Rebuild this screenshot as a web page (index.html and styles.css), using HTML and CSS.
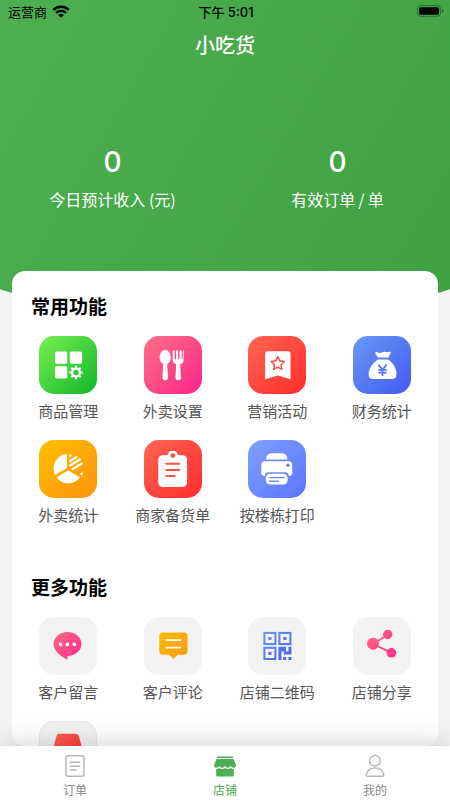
FILE: index.html
```html
<!DOCTYPE html>
<html lang="zh-CN">
<head>
<meta charset="utf-8">
<meta name="viewport" content="width=device-width, initial-scale=1">
<title>小吃货</title>
<link rel="stylesheet" href="styles.css">
</head>
<body>
<svg class="defs" aria-hidden="true">
  <defs>
    <linearGradient id="pink" x1="0" y1="0" x2="1" y2="1"><stop offset="0" stop-color="#fd6a85"/><stop offset="1" stop-color="#fc2d8b"/></linearGradient>
    <linearGradient id="amber" x1="0" y1="0" x2="1" y2="1"><stop offset="0" stop-color="#ffbc05"/><stop offset="1" stop-color="#ff970d"/></linearGradient>
    <linearGradient id="blue" gradientUnits="userSpaceOnUse" x1="15" y1="15" x2="43" y2="43"><stop offset="0" stop-color="#6496f4"/><stop offset="1" stop-color="#4560f0"/></linearGradient>
    <linearGradient id="share" gradientUnits="userSpaceOnUse" x1="14" y1="14" x2="43" y2="40"><stop offset="0" stop-color="#fd6a85"/><stop offset="1" stop-color="#fc2d8b"/></linearGradient>
    <linearGradient id="red" x1="0" y1="0" x2="1" y2="1"><stop offset="0" stop-color="#ff6252"/><stop offset="1" stop-color="#fe302f"/></linearGradient>
  </defs>
</svg>
<main class="page">
  <header class="hero">
    <div class="status">
      <div class="carrier">运营商
        <svg width="18" height="13" viewBox="0 0 18 13" fill="none" stroke="#000" stroke-width="2.3"><path d="M1.3 4.9a11 11 0 0 1 15.4 0M4 7.9a7.1 7.1 0 0 1 10 0"/><path d="M9 12.8 6.3 10a3.9 3.9 0 0 1 5.4 0z" fill="#000" stroke="none"/></svg>
      </div>
      <time>下午 5:01</time>
      <div class="battery">
        <svg width="27" height="12" viewBox="0 0 27 12"><rect x=".6" y=".6" width="23" height="10.8" rx="3" fill="none" stroke="#235c27" stroke-opacity=".75"/><rect x="2.2" y="2.2" width="19.8" height="7.6" rx="1.6"/><path d="M25 4v4q1.6-.6 1.6-2T25 4z" fill="#2a692e"/></svg>
      </div>
    </div>
    <h1>小吃货</h1>
    <dl class="stats">
      <div><dd>0</dd><dt>今日预计收入 (元)</dt></div>
      <div><dd>0</dd><dt>有效订单&thinsp;/&thinsp;单</dt></div>
    </dl>
  </header>
  <div class="card">
    <section>
      <h2>常用功能</h2>
      <div class="grid">
        <a class="item" href="#"><span class="tile green"><svg viewBox="0 0 58 58" fill="#fff"><rect x="16" y="15.5" width="12.3" height="12.3" rx="1.8"/><rect x="30.8" y="15.5" width="12.3" height="12.3" rx="1.8"/><rect x="16" y="30.3" width="12.3" height="12.3" rx="1.8"/><circle cx="37" cy="36.5" r="3.9" fill="none" stroke="#fff" stroke-width="2.4"/><path d="M37 29.8v3M37 40.2v3M30.3 36.5h3M40.7 36.5h3M32.3 31.8l2 2M39.7 39.2l2 2M41.7 31.8l-2 2M34.3 39.2l-2 2" stroke="#fff" stroke-width="2.2"/></svg></span>商品管理</a>
        <a class="item" href="#"><span class="tile pink"><svg viewBox="0 0 58 58" fill="#fff"><path d="M21.2 14c3.2 0 5.6 3.6 5.6 7.6 0 3.1-1.5 5.4-3.6 6.4l.8 13.2c.1 1.9-1.1 3.1-2.8 3.1s-2.9-1.2-2.8-3.1L19.2 28c-2.1-1-3.6-3.3-3.6-6.4 0-4 2.4-7.6 5.6-7.6z"/><path d="M29.6 14.2q1.1 0 1.1 1.2v7q.1 1 .7 1t.7-1v-7q0-1.2 1-1.2t1 1.2v7q.1 1 .7 1t.7-1v-7q0-1.2 1.1-1.2t1.100 1.200v7q.1 1 .6 1t.5-1v-7q0-1.200.9-1v9c0 2.700-1.400 4.200-3.500 4.900l.8 13c.1 1.800-1 3-2.800 3s-2.900-1.200-2.800-3l.8-13c-2.100-.7-3.500-2.200-3.500-4.900v-8q0-1.200.9-1.200z"/></svg></span>外卖设置</a>
        <a class="item" href="#"><span class="tile red"><svg viewBox="0 0 58 58" fill="#fff"><path d="M19.5 15.3h20.7q2.3 0 2.3 2.3v25.7l-12.7-3.8-12.7 3.8V17.6q0-2.3 2.4-2.3z"/><path d="m29.8 20.7 2 4.1 4.6.7-3.3 3.3.8 4.6-4.1-2.2-4.1 2.2.8-4.6-3.3-3.3 4.6-.7z" fill="none" stroke="#ff4a40" stroke-width="1.5" stroke-linejoin="round"/></svg></span>营销活动</a>
        <a class="item" href="#"><span class="tile blue"><svg viewBox="0 0 58 58" fill="#fff"><path d="M22.8 16.2c1.4-.8 2.8 1.1 4.3.8 1.8-.4 2.8-1.5 4.7-1.3 1.8.2 2.9.9 4.7.1 1-.4 1.6.2 1.2 1l-2.2 4.7H25l-2.8-4q-.4-.9.6-1.3z"/><path d="M25.3 23.5h9.8c4.7 2.8 8.5 8.8 8.4 14.6 0 3.2-1.3 4.9-4.2 4.9H19.8c-2.9 0-4.3-1.700-4.200-4.900.1-5.700 4.600-11.800 9.700-14.600z"/><path d="m25.4 28.500 4.100 5.300 4.100-5.300M25.400 33.800h8.200M25.400 36.600h8.200M29.500 33.800v6.100" fill="none" stroke="#5076f1" stroke-width="1.8"/></svg></span>财务统计</a>
        <a class="item" href="#"><span class="tile amber"><svg viewBox="0 0 58 58" fill="#fff"><path d="M27.9 14.1v14l-11.8 6.8a14.2 14.2 0 0 1 11.8-20.8z"/><path d="m17.4 37.2 11.7-6.8L41 37.2a14.3 14.3 0 0 1-23.6 0z"/><path d="m31.1 21 6.5-3.9M31.1 25.6l9.9-6M33.6 29l9-5.3M42.3 34l.6-.4M31 15.7l.6-.3" stroke="#fff" stroke-width="2.300" stroke-linecap="round"/></svg></span>外卖统计</a>
        <a class="item" href="#"><span class="tile red"><svg viewBox="0 0 58 58" fill="#fff"><rect x="14.3" y="15.3" width="28.8" height="31.7" rx="4.5"/><path d="M20.6 19.3v-2.5q0-1.5 1.8-1.5h1.2a5.2 5.2 0 0 1 10.3 0h1.2q1.8 0 1.8 1.5v2.5z"/><circle cx="28.8" cy="15.6" r="2.4" fill="#ff5549"/><path d="M22.3 23.8h13M22.3 30.1h13M22.3 36h8.3" stroke="#ff5046" stroke-width="2" stroke-linecap="round"/></svg></span>商家备货单</a>
        <a class="item" href="#"><span class="tile indigo"><svg viewBox="0 0 58 58" fill="#fff"><path d="M18 19.5c.2-4.1 2.2-6.2 6-6.2h9.5c3.7 0 5.7 2.1 5.9 6.2z"/><path d="M17 21.2h23.4q3.8 0 3.8 3.8v8q0 3-3 3h-.5c0-2.3-1.3-3.8-3.6-3.8H20.4c-2.3 0-3.6 1.5-3.6 3.8h-.5q-3 0-3-3v-8q0-3.8 3.7-3.8z"/><rect x="17.8" y="33.7" width="21.8" height="10.7" rx="4.3"/><circle cx="40" cy="25.2" r="1.8" fill="#6b86ff"/><path d="M21.8 37.6h14.3M21.8 41.2h8.6" stroke="#6b86ff" stroke-width="1.4" stroke-linecap="round"/></svg></span>按楼栋打印</a>
      </div>
    </section>
    <section>
      <h2>更多功能</h2>
      <div class="grid">
        <a class="item" href="#"><span class="tile"><svg viewBox="0 0 58 58"><path d="M28.5 15c7.8 0 14 5.2 14 12 0 6.3-5.9 11.7-14 12v3.8c-7.2-3.8-14-9.2-14-15.8 0-6.8 6.2-12 14-12z" fill="url(#pink)"/><g fill="#fff"><circle cx="21.5" cy="27.4" r="1.8"/><circle cx="28.4" cy="27.4" r="1.8"/><circle cx="35.3" cy="27.4" r="1.8"/></g></svg></span>客户留言</a>
        <a class="item" href="#"><span class="tile"><svg viewBox="0 0 58 58"><path d="M19 15.6h20.8q3.7 0 3.7 3.7v14.8q0 3.7-3.7 3.7h-6.2l-4.2 4.2-4.2-4.2H19q-3.7 0-3.7-3.7V19.3q0-3.7 3.7-3.7z" fill="url(#amber)"/><path d="M22.4 23.1h14M22.4 30.6h14" stroke="#fff" stroke-width="1.8" stroke-linecap="round"/></svg></span>客户评论</a>
        <a class="item" href="#"><span class="tile"><svg viewBox="0 0 58 58"><g fill="none" stroke="url(#blue)" stroke-width="2"><rect x="16.4" y="15.9" width="11" height="11.2"/><rect x="31.4" y="15.9" width="11" height="11.2"/><rect x="16.4" y="30.8" width="11" height="11.2"/></g><path d="M20.3 19.9h3.2v3.2h-3.2zM35.3 19.9h3.2v3.2h-3.2zM20.3 34.8h3.2V38h-3.2zM30.4 29.8h7.7v4.8h2.4v-4.8h2.9v7.6h-7.6v-2.8h-2.4V43h-3zM35.2 40h2.9v3h-2.9zM40.5 40h2.9v3h-2.9z" fill="url(#blue)"/></svg></span>店铺二维码</a>
        <a class="item" href="#"><span class="tile"><svg viewBox="0 0 58 58"><path d="m34.7 17.7-14.5 9.4 18.2 8.8" fill="none" stroke="url(#share)" stroke-width="1.8"/><g fill="url(#share)"><circle cx="20" cy="26.8" r="6"/><circle cx="34.7" cy="17.5" r="4.7"/><circle cx="38.4" cy="35.8" r="4.8"/></g></svg></span>店铺分享</a>
        <a class="item" href="#" aria-label="更多"><span class="tile outlined"><svg viewBox="0 0 58 58"><path d="M20 12.7h16.5q2.4 0 3.2 2l2.300 8q.3 1.500.3 3v12q0 5-5 5H20q-5 0-5-5v-12q0-1.500.3-3l2.300-8q.5-2 2.400-2z" fill="url(#red)"/></svg></span></a>
      </div>
    </section>
  </div>
</main>
<nav class="tabs">
  <a href="#"><svg viewBox="0 0 24 24" fill="none" stroke="#b8b8b8" stroke-width="1.5" stroke-linecap="round"><rect x="3" y="1.700" width="18" height="20.600" rx="2"/><path d="M7.300 8.300h9.400M7.300 12.200h9.400M7.300 16h6"/></svg>订单</a>
  <a href="#" class="active" aria-current="page"><svg viewBox="0 0 24 24" fill="#4caf50"><path d="M4 2.500h16v1.600H4zM3.600 5h16.800L23 11q.3 2.800-2.300 2.800-1.800 0-2.900-1.700-1.200 1.700-2.900 1.700T12 12.100q-1.200 1.700-2.900 1.700t-2.900-1.700q-1.100 1.700-2.900 1.700Q.7 13.800 1 11z"/><path d="M3.200 15q1.800.1 3-.9 2.500 1.900 5.800 0 3.300 1.900 5.800 0 1.200 1 3 .9v6q0 1.500-1.500 1.500H4.700q-1.500 0-1.500-1.500z"/></svg>店铺</a>
  <a href="#"><svg viewBox="0 0 24 24" fill="none" stroke="#b8b8b8" stroke-width="1.500"><circle cx="12" cy="6.800" r="5.300"/><path d="M5 22.200q-2 0-1.700-1.700c.8-4 4.200-6.500 8.700-6.500s7.900 2.500 8.700 6.500q.3 1.700-1.700 1.700z"/></svg>我的</a>
</nav>
</body>
</html>
```

FILE: styles.css
```css
* {
  box-sizing: border-box;
}

body {
  display: flex;
  flex-direction: column;
  height: 100vh;
  margin: 0;
  background: #f4f4f4;
  color: #555;
  font-family: Inter, "Noto Sans CJK SC", sans-serif;
}

a {
  color: inherit;
  text-decoration: none;
}

svg {
  display: block;
}

.defs {
  position: absolute;
  width: 0;
  height: 0;
}

.page {
  display: flex;
  flex: 1;
  flex-direction: column;
  min-height: 0;
  overflow: hidden;
}

.hero {
  flex: none;
  padding-bottom: 113px;
  background: linear-gradient(120deg, #4caf50, #3fa142);
  clip-path: ellipse(111% 100% at 50% 0);
  color: #fff;
}

.status {
  display: grid;
  grid-template-columns: 1fr auto 1fr;
  align-items: center;
  height: 22px;
  padding: 0 6px 0 8px;
  color: #000;
  font-size: 13px;
  font-weight: 500;
}

.carrier {
  display: flex;
  align-items: center;
  gap: 5px;
  font-weight: 400;
}

.battery {
  justify-self: end;
}

h1 {
  margin: 0;
  font-size: 20px;
  font-weight: 500;
  line-height: 48px;
  text-align: center;
}

.stats {
  display: grid;
  grid-template-columns: 1fr 1fr;
  margin: 72px 0 0;
  text-align: center;
}

.stats div {
  display: flex;
  flex-direction: column;
  gap: 5px;
}

.stats dd {
  margin: 0;
  font-size: 28px;
  font-weight: 500;
  line-height: 40px;
}

.stats dt {
  font-family: "Noto Sans CJK SC", sans-serif;
  font-size: 16px;
  line-height: 24px;
}

.card {
  flex: 1;
  min-height: 0;
  margin: -53px 12px 0;
  padding: 23px 4px 0;
  overflow: hidden;
  border-radius: 13px;
  background: #fff;
  z-index: 1;
}

h2 {
  margin: 0 0 14px 15px;
  color: #000;
  font-size: 19px;
  font-weight: 600;
  line-height: 28px;
}

.grid {
  display: grid;
  grid-template-columns: repeat(4, 1fr);
  row-gap: 17px;
  margin-bottom: 48px;
}

.item {
  display: flex;
  flex-direction: column;
  align-items: center;
  gap: 7px;
  font-size: 15px;
  line-height: 22px;
  white-space: nowrap;
}

.tile {
  width: 58px;
  height: 58px;
  overflow: hidden;
  border-radius: 15px;
  background: #f3f3f3;
}

.tile.green {
  background: linear-gradient(135deg, #78f04f, #12b52c);
}

.tile.pink {
  background: linear-gradient(135deg, #fd6f85, #fc2689);
}

.tile.red {
  background: linear-gradient(135deg, #ff6555, #ff2d2c);
}

.tile.blue {
  background: linear-gradient(135deg, #6799f4, #435af0);
}

.tile.amber {
  background: linear-gradient(135deg, #ffc000, #ff910e);
}

.tile.indigo {
  background: linear-gradient(135deg, #80a0ff, #5b75ff);
}

.tile.outlined {
  box-shadow: inset 0 0 0 1px #e6e6e6;
}

.tabs {
  z-index: 2;
  display: grid;
  flex: none;
  grid-template-columns: repeat(3, 1fr);
  padding: 8px 0 0;
  background: #fff;
  box-shadow: 0 0 30px rgba(0, 0, 0, 0.2);
  color: #888;
  font-size: 12px;
  line-height: 18px;
}

.tabs a {
  display: flex;
  flex-direction: column;
  align-items: center;
  gap: 4px;
}

.tabs svg {
  width: 24px;
  height: 24px;
}

.tabs .active {
  color: #4caf50;
}
```
